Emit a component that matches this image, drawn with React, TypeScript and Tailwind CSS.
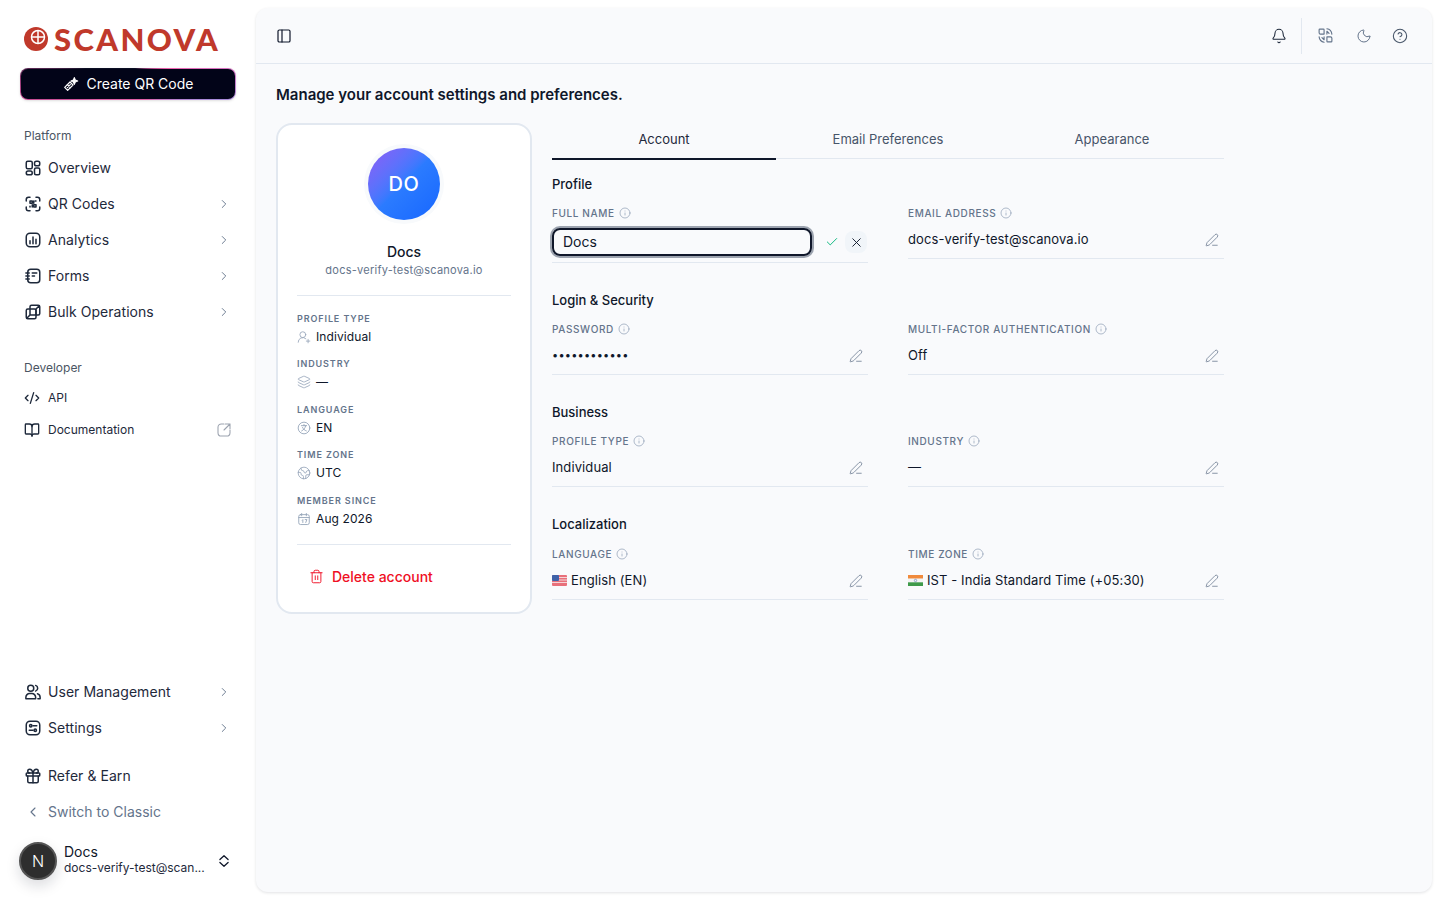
import type { ReactNode } from 'react';
import {
  Bell,
  BookOpen,
  Check,
  ChevronLeft,
  ChevronRight,
  CircleHelp,
  CodeXml,
  Earth,
  Gift,
  Info,
  Layers,
  Moon,
  PanelLeft,
  PenLine,
  Trash2,
  UserRoundPlus,
  X,
} from 'lucide-react';

const I = 'w-[18px] h-[18px] shrink-0 text-[#1e293b]';

function Svg({ children }: { children: ReactNode }) {
  return (
    <svg className={I} viewBox="0 0 24 24" fill="none" stroke="currentColor" strokeWidth={2} strokeLinecap="round" strokeLinejoin="round">
      {children}
    </svg>
  );
}

const OverviewIcon = () => (
  <Svg>
    <rect x="3" y="3" width="8" height="10" rx="2" />
    <rect x="14" y="3" width="7" height="6" rx="2.5" />
    <rect x="3" y="16" width="8" height="5" rx="2.5" />
    <rect x="14" y="12" width="7" height="9" rx="2" />
  </Svg>
);

const QrIcon = () => (
  <Svg>
    <path d="M3 8V6a3 3 0 0 1 3-3h2M16 3h2a3 3 0 0 1 3 3v2M21 16v2a3 3 0 0 1-3 3h-2M8 21H6a3 3 0 0 1-3-3v-2" />
    <rect x="8" y="8" width="3" height="3" />
    <rect x="13" y="13" width="3" height="3" />
    <path d="M15 8h1M8 15v1M11 13v3M13 8v3" />
  </Svg>
);

const AnalyticsIcon = () => (
  <Svg>
    <rect x="3" y="3" width="18" height="18" rx="5" />
    <path d="M8 17v-4M12 17V8M16 17v-6" />
  </Svg>
);

const FormsIcon = () => (
  <Svg>
    <rect x="5" y="3" width="16" height="18" rx="4" />
    <path d="M2.5 8H7M2.5 12H7M2.5 16H7M11 8h6M11 12h3" />
  </Svg>
);

const BulkIcon = () => (
  <Svg>
    <rect x="3" y="8" width="13" height="13" rx="2" />
    <path d="M8 8V5a2 2 0 0 1 2-2h9a2 2 0 0 1 2 2v9a2 2 0 0 1-2 2h-3M4 20l4-4h8M20 4l-4 4v8M8 8v8" />
  </Svg>
);

const UsersIcon = () => (
  <Svg>
    <circle cx="9" cy="7" r="4" />
    <path d="M2.5 21v-2a5 5 0 0 1 5-5h3a5 5 0 0 1 5 5v2h-13z" />
    <path d="M15.5 3.2a4 4 0 0 1 0 7.6M18 14.3a5 5 0 0 1 3.5 4.7v2h-3" />
  </Svg>
);

const SettingsIcon = () => (
  <Svg>
    <rect x="3" y="3" width="18" height="18" rx="5" />
    <circle cx="9" cy="9" r="1.6" />
    <circle cx="15" cy="15" r="1.6" />
    <path d="M12 9h5M7 15h5" />
  </Svg>
);

const ExternalIcon = () => (
  <svg className="w-[16px] h-[16px] text-[#9ca3af]" viewBox="0 0 24 24" fill="none" stroke="currentColor" strokeWidth={1.6} strokeLinecap="round" strokeLinejoin="round">
    <path d="M12 3H8a5 5 0 0 0-5 5v8a5 5 0 0 0 5 5h8a5 5 0 0 0 5-5v-4" />
    <path d="M14 3h7v7M21 3l-9 9" />
  </svg>
);

const WandIcon = () => (
  <svg className="w-4 h-4" viewBox="0 0 24 24" fill="none" stroke="currentColor" strokeWidth={1.8} strokeLinejoin="round" strokeLinecap="round">
    <path d="M2.5 17 7 21.500 15 13.500 10.500 9z" />
    <path d="M6.500 13l4.500 4.500M6.500 17.500 11 13" />
    <path d="M17 2.500 18.400 6 22 7.500 18.400 9 17 12.500 15.600 9 12 7.500 15.600 6z" fill="currentColor" />
  </svg>
);

const SwapGlobeIcon = () => (
  <svg className="w-[17px] h-[17px] text-[#64748b]" viewBox="0 0 24 24" fill="none" stroke="currentColor" strokeWidth={1.6} strokeLinecap="round" strokeLinejoin="round">
    <path d="M3 4a1 1 0 0 1 1-1h5a1 1 0 0 1 1 1v6H5a2 2 0 0 1-2-2z" />
    <path d="M21 20a1 1 0 0 1-1 1h-5a1 1 0 0 1-1-1v-6h5a2 2 0 0 1 2 2z" />
    <path d="M14 2.500c4 .5 6.500 3.500 7 7.500M14 10V6l3 3" />
    <path d="M10 21.500c-4-.5-6.500-3.500-7-7.500M10 14v4l-3-3" />
  </svg>
);

const LangCircleIcon = ({ className }: { className?: string }) => (
  <svg className={className} viewBox="0 0 24 24" fill="none" stroke="currentColor" strokeWidth={1.5} strokeLinecap="round" strokeLinejoin="round">
    <circle cx="12" cy="12" r="10" />
    <path d="M7.500 8h9M12 6v2M15 8c-1 4.500-3.500 7-7 9M9.500 11c1 2.500 3.500 5 6.500 6" />
  </svg>
);

const CalIcon = ({ className }: { className?: string }) => (
  <svg className={className} viewBox="0 0 24 24" fill="none" stroke="currentColor" strokeWidth={1.5} strokeLinecap="round" strokeLinejoin="round">
    <rect x="3" y="4.500" width="18" height="17" rx="3" />
    <path d="M3 9.500h18M8 2.500v4M16 2.500v4M9 14l1-1v5M14 13h3l-2 5" />
  </svg>
);

function NavRow({ icon, label, arrow }: { icon: ReactNode; label: string; arrow?: boolean }) {
  return (
    <div className="flex items-center h-9 px-6 text-sm text-[#1e293b] tracking-[0.05px]">
      <div className="w-6 flex items-center">{icon}</div>
      <span className="flex-1">{label}</span>
      {arrow && <ChevronRight className="w-[14px] h-[14px] text-[#64748b] mr-[1px]" strokeWidth={1.6} />}
    </div>
  );
}

function Sidebar() {
  return (
    <aside className="w-[256px] h-[900px] shrink-0 flex flex-col bg-white">
      <div className="flex items-center h-[24px] mt-[27px] pl-6 gap-[6px]">
        <svg className="w-6 h-6 shrink-0" viewBox="0 0 24 24">
          <circle cx="12" cy="12" r="12" fill="#c0392b" />
          <circle cx="14" cy="10" r="6.500" fill="none" stroke="#fff" strokeWidth="1.500" />
          <path d="M14 3.500v13M7.500 10h13" stroke="#fff" strokeWidth="1.500" />
        </svg>
        <span className="font-['Lato',sans-serif] font-black text-[31px] leading-none text-[#c0392b] tracking-[2.4px]">SCANOVA</span>
      </div>
      <div className="mx-5 mt-[17px] h-8 rounded-lg p-px bg-[conic-gradient(from_0deg,#0b0f24_0deg,#0b0f24_25deg,#f062b0_70deg,#a78bda_100deg,#e060a8_130deg,#e060a8_240deg,#c04a90_265deg,#0b0f24_290deg)] shadow-sm">
        <div className="h-full rounded-[7px] bg-[#020418] flex items-center justify-center gap-2 text-sm text-white">
          <WandIcon />
          <span>Create QR Code</span>
        </div>
      </div>
      <div className="mt-[28px] px-6 h-4 flex items-center text-xs text-[#4b5563]">Platform</div>
      <div className="mt-[6px]">
        <NavRow icon={<OverviewIcon />} label="Overview" />
        <NavRow icon={<QrIcon />} label="QR Codes" arrow />
        <NavRow icon={<AnalyticsIcon />} label="Analytics" arrow />
        <NavRow icon={<FormsIcon />} label="Forms" arrow />
        <NavRow icon={<BulkIcon />} label="Bulk Operations" arrow />
      </div>
      <div className="mt-[30px] px-6 h-4 flex items-center text-xs text-[#4b5563]">Developer</div>
      <div className="mt-[6px] text-xs text-[#1e293b]">
        <div className="flex items-center h-8 px-6">
          <div className="w-6 flex items-center"><CodeXml className="w-4 h-4" strokeWidth={2} /></div>
          <span>API</span>
        </div>
        <div className="flex items-center h-8 px-6">
          <div className="w-6 flex items-center"><BookOpen className="w-4 h-4" strokeWidth={2} /></div>
          <span className="flex-1">Documentation</span>
          <ExternalIcon />
        </div>
      </div>
      <div className="flex-1" />
      <NavRow icon={<UsersIcon />} label="User Management" arrow />
      <NavRow icon={<SettingsIcon />} label="Settings" arrow />
      <div className="mt-3">
        <NavRow icon={<Gift className={I} strokeWidth={2} />} label="Refer & Earn" />
      </div>
      <div className="flex items-center h-9 px-6 text-sm text-[#64748b]">
        <div className="w-6 flex items-center pl-[1px]"><ChevronLeft className="w-4 h-4" strokeWidth={1.6} /></div>
        <span>Switch to Classic</span>
      </div>
      <div className="flex items-center h-[38px] mt-[12px] mb-[20px] pl-[19px] pr-6">
        <div className="w-[38px] h-[38px] rounded-full bg-[#2e2e2e] border-2 border-[#555] flex items-center justify-center text-white text-base font-light shadow-[0_6px_14px_rgba(15,23,42,0.15)]">N</div>
        <div className="ml-[7px] flex-1 min-w-0 pb-[5px]">
          <div className="text-sm leading-[17px] text-[#0f172a]">Docs</div>
          <div className="text-xs leading-[15px] text-[#1e293b] whitespace-nowrap">docs-verify-test@scan...</div>
        </div>
        <svg className="w-[14px] h-[14px] mr-[1px] text-[#0f172a]" viewBox="0 0 24 24" fill="none" stroke="currentColor" strokeWidth={2.2} strokeLinecap="round" strokeLinejoin="round">
          <path d="M5 9.500 12 3l7 6.500M5 14.500l7 6.500 7-6.500" />
        </svg>
      </div>
    </aside>
  );
}

function TopBar() {
  return (
    <header className="h-14 shrink-0 flex items-center border-b border-[#e2e8f0] pl-5 pr-6">
      <PanelLeft className="w-4 h-4 text-[#0f172a]" strokeWidth={1.8} />
      <div className="flex-1" />
      <Bell className="w-4 h-4 text-[#1e293b]" strokeWidth={1.6} />
      <div className="w-px h-9 bg-[#e2e8f0] ml-[14px] mr-[15px]" />
      <SwapGlobeIcon />
      <Moon className="w-4 h-4 text-[#64748b] ml-[22px]" strokeWidth={1.5} />
      <CircleHelp className="w-4 h-4 text-[#475569] ml-5" strokeWidth={1.6} />
    </header>
  );
}

const statIcon = 'w-[14px] h-[14px] text-[#94a3b8]';

const stats = [
  { label: 'Profile Type', value: 'Individual', icon: <UserRoundPlus className={statIcon} strokeWidth={1.4} /> },
  { label: 'Industry', value: '—', icon: <Layers className={statIcon} strokeWidth={1.4} /> },
  { label: 'Language', value: 'EN', icon: <LangCircleIcon className={statIcon} /> },
  { label: 'Time Zone', value: 'UTC', icon: <Earth className={statIcon} strokeWidth={1.4} /> },
  { label: 'Member Since', value: 'Aug 2026', icon: <CalIcon className={statIcon} /> },
];

function ProfileCard() {
  return (
    <div className="w-[256px] h-[491px] shrink-0 rounded-2xl border-2 border-[#e2e8f0] bg-white px-[19px] pt-[23px]">
      <div className="w-[72px] h-[72px] mx-auto rounded-full bg-gradient-to-br from-[#8b5cf6] via-[#2b7bff] to-[#1766ff] flex items-center justify-center text-white text-xl font-medium tracking-[0.5px] ring-4 ring-[#f8fafc]">DO</div>
      <div className="mt-[22px] text-center text-sm font-medium leading-5 text-[#0f172a]">Docs</div>
      <div className="text-center text-[11px] leading-4 text-[#64748b] tracking-[0.25px]">docs-verify-test@scanova.io</div>
      <div className="mt-[17px] border-t border-[#e2e8f0]" />
      <div className="mt-[16px] flex flex-col gap-[10.4px]">
        {stats.map((s) => (
          <div key={s.label} className="h-[35px]">
            <div className="text-[9px] leading-[14px] font-semibold uppercase tracking-[0.9px] text-[#64748b]">{s.label}</div>
            <div className="mt-[1px] flex items-center gap-[5px] h-5 text-xs text-[#0f172a] tracking-[0.1px]">
              {s.icon}
              <span>{s.value}</span>
            </div>
          </div>
        ))}
      </div>
      <div className="mt-[15px] border-t border-[#e2e8f0]" />
      <div className="mt-[22px] pl-3 flex items-center gap-2 text-sm font-medium text-[#ef0f24]">
        <Trash2 className="w-[15px] h-[15px]" strokeWidth={1.5} />
        <span>Delete account</span>
      </div>
    </div>
  );
}

const UsFlag = () => (
  <svg className="w-[15px] h-[11px] shrink-0" viewBox="0 0 15 11">
    <rect width="15" height="11" rx="1" fill="#e8707a" />
    <path d="M0 2.500h15M0 5h15M0 7.500h15" stroke="#f5d5d8" strokeWidth="1" />
    <rect width="7" height="6" rx="1" fill="#3f62a8" />
  </svg>
);

const InFlag = () => (
  <svg className="w-[15px] h-[11px] shrink-0" viewBox="0 0 15 11">
    <rect width="15" height="3.700" fill="#f08a3c" />
    <rect y="3.700" width="15" height="3.600" fill="#f4f4f4" />
    <rect y="7.300" width="15" height="3.700" fill="#3f9a4a" />
    <circle cx="7.500" cy="5.500" r="1.200" fill="none" stroke="#3f62a8" strokeWidth="0.5" />
  </svg>
);

function FieldLabel({ label }: { label: string }) {
  return (
    <div className="h-4 flex items-center gap-1 text-[10px] font-medium uppercase tracking-[0.62px] text-[#64748b]">
      <span>{label}</span>
      <Info className="w-3 h-3 text-[#94a3b8]" strokeWidth={1.5} />
    </div>
  );
}

function Field({ label, children }: { label: string; children: ReactNode }) {
  return (
    <div className="w-[316px]">
      <FieldLabel label={label} />
      <div className="mt-1 h-[34px] pb-[5px] flex items-center border-b border-[#e2e8f0] text-[13px] tracking-[0.1px] text-[#0f172a]">
        <div className="flex-1 flex items-center gap-1 min-w-0 mt-[1px]">{children}</div>
        <PenLine className="w-[14px] h-[14px] mr-[5px] mt-[2px] text-[#64748b]" strokeWidth={1.3} />
      </div>
    </div>
  );
}

function Section({ title, className, children }: { title: string; className?: string; children: ReactNode }) {
  return (
    <section className={className}>
      <h3 className="text-[13px] font-medium leading-5 text-[#0f172a]">{title}</h3>
      <div className="grid grid-cols-2 gap-x-10 w-[672px]">{children}</div>
    </section>
  );
}

function AccountForm() {
  return (
    <div className="w-[672px]">
      <div className="grid grid-cols-3 h-[36px] border-b border-[#e2e8f0] text-[13px] text-[#475569]">
        <div className="flex items-center justify-center h-[37px] pb-[2px] border-b-2 border-[#0f172a] text-[#1e293b]">Account</div>
        <div className="flex items-center justify-center pb-[3px]">Email Preferences</div>
        <div className="flex items-center justify-center pb-[3px]">Appearance</div>
      </div>
      <Section title="Profile" className="mt-[15px] [&>div]:mt-[11px]">
        <div className="w-[316px]">
          <FieldLabel label="Full Name" />
          <div className="mt-[7px] h-[35px] pb-[6px] flex items-center border-b border-[#e2e8f0]">
            <div className="w-[260px] h-[28px] flex items-center rounded-lg border-2 border-[#0f172a] ring-2 ring-[#9ca3af] px-[9px] text-sm text-[#0f172a]">Docs</div>
            <div className="w-6 ml-2 flex justify-center">
              <Check className="w-[14px] h-[14px] text-[#10b981]" strokeWidth={1.7} />
            </div>
            <div className="w-[22px] h-[22px] ml-[1px] rounded-lg bg-[#f1f5f9] flex items-center justify-center">
              <X className="w-[15px] h-[15px] text-[#0f172a]" strokeWidth={1.5} />
            </div>
          </div>
        </div>
        <Field label="Email Address">
          <span>docs-verify-test@scanova.io</span>
        </Field>
      </Section>
      <Section title="Login & Security" className="mt-[27px] [&>div]:mt-[11px]">
        <Field label="Password">
          <span className="text-[11px] tracking-[0.2px]">••••••••••••</span>
        </Field>
        <Field label="Multi-Factor Authentication">
          <span>Off</span>
        </Field>
      </Section>
      <Section title="Business" className="mt-[27px] [&>div]:mt-[11px]">
        <Field label="Profile Type">
          <span>Individual</span>
        </Field>
        <Field label="Industry">
          <span>—</span>
        </Field>
      </Section>
      <Section title="Localization" className="mt-[27px] [&>div]:mt-[12px]">
        <Field label="Language">
          <UsFlag />
          <span>English (EN)</span>
        </Field>
        <Field label="Time Zone">
          <InFlag />
          <span>IST - India Standard Time (+05:30)</span>
        </Field>
      </Section>
    </div>
  );
}

export default function App() {
  return (
    <div className="flex h-[900px] w-[1440px] overflow-hidden bg-white font-['Inter',sans-serif]">
      <Sidebar />
      <main className="mt-2 mb-2 mr-2 flex-1 flex flex-col rounded-xl bg-[#f9fafc] shadow-[0_1px_3px_rgba(15,23,42,0.12)]">
        <TopBar />
        <div className="px-5 pt-[21px]">
          <h1 className="text-[15px] font-semibold leading-5 text-[#0f172a]">Manage your account settings and preferences.</h1>
          <div className="mt-[18px] flex gap-5 items-start">
            <ProfileCard />
            <AccountForm />
          </div>
        </div>
      </main>
    </div>
  );
}
